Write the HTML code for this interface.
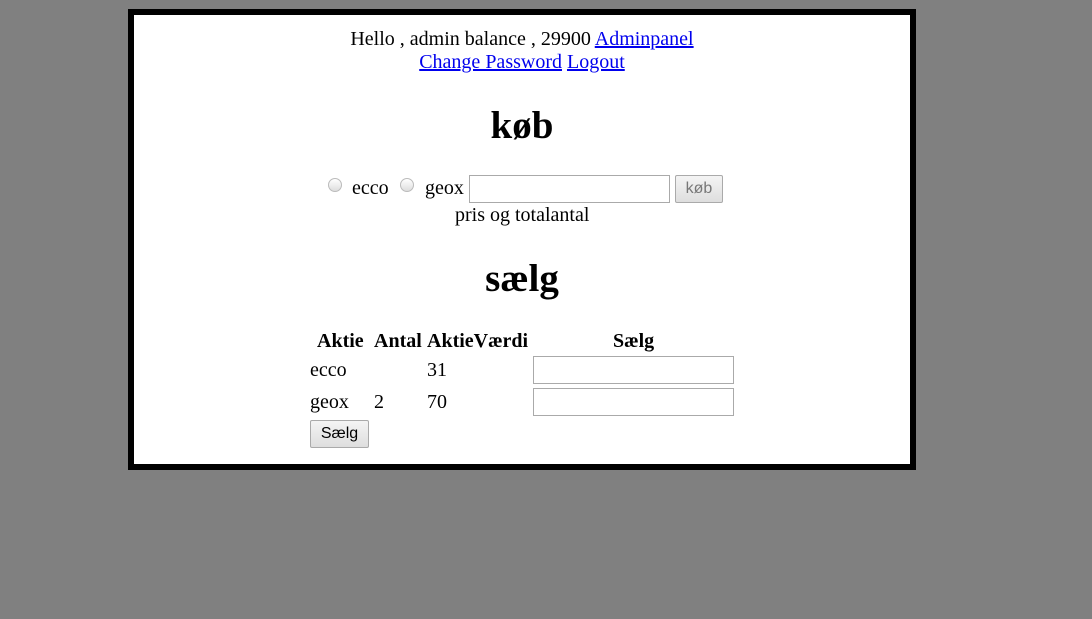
<!DOCTYPE html>
<html><head><meta charset="utf-8"><style>
body{margin:0;background:#808080;width:1092px;height:619px;position:relative;overflow:hidden;font-family:"Liberation Serif",serif;font-size:20px;color:#000}
.box{position:absolute;left:128px;top:9px;width:776px;height:449px;border:6px solid #000;background:#fff}
.a{position:absolute;white-space:nowrap;line-height:22px}
a{color:#00e}
.c{left:0;width:776px;text-align:center}
h1{margin:0;font-size:39px;font-weight:bold}
.in{position:absolute;border:1px solid #aaa;background:#fff;box-sizing:border-box}
.btn{position:absolute;border:1px solid #aaa;background:linear-gradient(#f4f4f4,#dedede);box-sizing:border-box;font-family:"Liberation Sans",sans-serif;font-size:16px;text-align:center;border-radius:2px}
.r{position:absolute;width:14px;height:14px;border-radius:50%;border:1px solid #bbb;background:linear-gradient(#fff,#ddd);box-sizing:border-box}
b{position:absolute;white-space:nowrap}
</style></head><body>
<div class="box">
<div class="a c" style="top:13px">Hello , admin balance , 29900 <a href="#">Adminpanel</a></div>
<div class="a c" style="top:36px"><a href="#">Change Password</a> <a href="#">Logout</a></div>
<div class="a c" style="top:89px;line-height:44px"><h1>køb</h1></div>
<div class="r" style="left:194px;top:163px"></div>
<div class="a" style="left:218px;top:162px">ecco</div>
<div class="r" style="left:266px;top:163px"></div>
<div class="a" style="left:291px;top:162px">geox</div>
<div class="in" style="left:335px;top:160px;width:201px;height:28px"></div>
<div class="btn" style="left:541px;top:160px;width:48px;height:28px;line-height:26px;color:#777">køb</div>
<div class="a" style="left:321px;top:189px">pris og totalantal</div>
<div class="a c" style="top:242px;line-height:44px"><h1>sælg</h1></div>
<b style="left:183px;top:315px">Aktie</b>
<b style="left:240px;top:315px">Antal</b>
<b style="left:293px;top:315px">AktieVærdi</b>
<b style="left:479px;top:315px">Sælg</b>
<div class="a" style="left:176px;top:344px">ecco</div>
<div class="a" style="left:293px;top:344px">31</div>
<div class="in" style="left:399px;top:341px;width:201px;height:28px"></div>
<div class="a" style="left:176px;top:376px">geox</div>
<div class="a" style="left:240px;top:376px">2</div>
<div class="a" style="left:293px;top:376px">70</div>
<div class="in" style="left:399px;top:373px;width:201px;height:28px"></div>
<div class="btn" style="left:176px;top:405px;width:59px;height:28px;line-height:26px">Sælg</div>
</div>
</body></html>
